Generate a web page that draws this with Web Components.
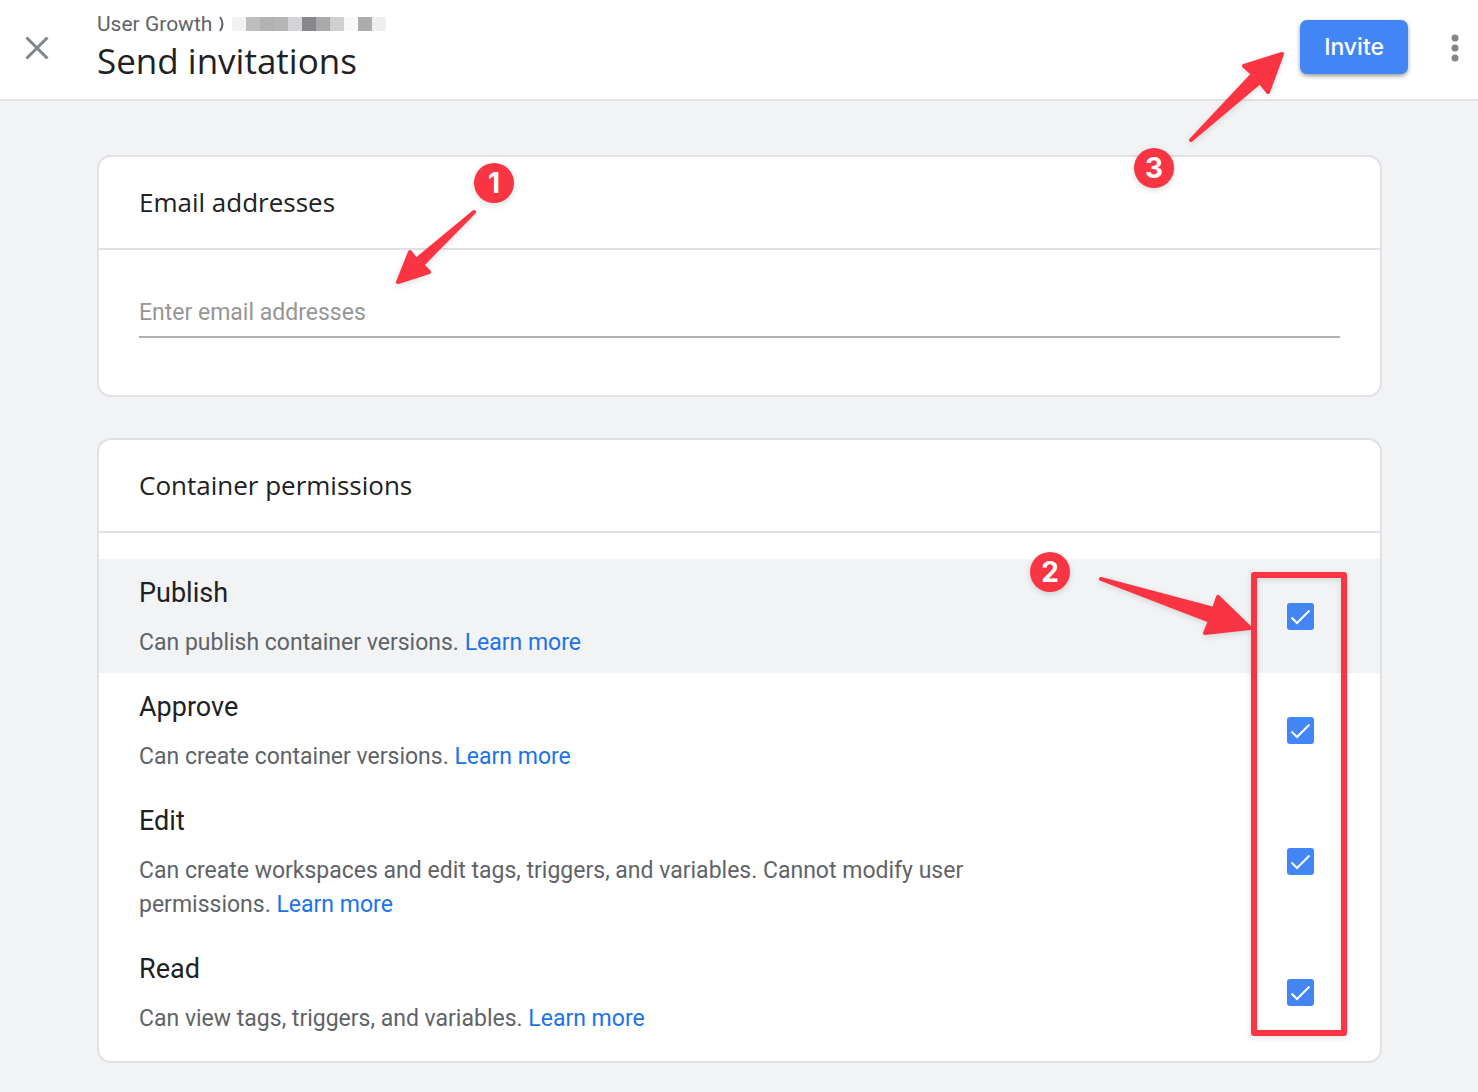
<!DOCTYPE html>
<html lang="en">
<head>
<meta charset="utf-8">
<title>Send invitations</title>
<style>
    body {
        margin: 0;
        min-height: 100vh;
        background: #f1f3f4;
        color: #202124;
        font-family: Roboto, "Liberation Sans", sans-serif;
        font-size: 23px;
        line-height: 34px;
    }
    main {
        display: flex;
        flex-direction: column;
        gap: 41px;
        padding: 54px 96px 29px 97px;
    }
    a {
        color: #1a73e8;
        text-decoration: none;
    }
    /* callouts lie over the page, each anchored to the box it is in */
    step-badge, step-arrow, step-frame {
        position: absolute;
        z-index: 2;
    }
    .badge-email { left: 375px; top: 6px; }
    .arrow-email { left: 296px; top: 52px; }
    .badge-permissions { right: 310px; top: 112px; }
    .arrow-permissions { right: 126px; top: 135px; }
    .frame-permissions { right: 33px; top: 132px; bottom: 25px; width: 96px; }
    .badge-invite { right: 304px; top: 148px; }
    .arrow-invite { right: 192px; top: 50px; }
</style>
</head>
<body>

<template id="app-header-template">
    <style>
        :host {
            position: relative;
            z-index: 1;
            display: flex;
            align-items: center;
            box-sizing: border-box;
            height: 101px;
            padding: 0 8px 2px 0;
            background: #fff;
            border-bottom: 2px solid #dfe1e5;
        }
        button {
            border: 0;
            padding: 0;
            background: none;
            font: inherit;
            cursor: pointer;
        }
        svg {
            display: block;
        }
        .close {
            padding: 24px 13px 26px;
        }
        .titles {
            flex: 1;
            margin-left: 23px;
        }
        .crumbs {
            display: flex;
            align-items: center;
            gap: 7px;
            color: #5f6368;
            font-size: 21px;
            line-height: 24px;
        }
        h1 {
            margin: 0;
            font-family: "Open Sans", sans-serif;
            font-size: 35px;
            font-weight: 400;
            line-height: 50px;
        }
        .invite {
            height: 54px;
            padding: 0 24px;
            margin: 0 30px 4px 0;
            border-radius: 7px;
            background: #4285f4;
            color: #fff;
            font-family: Inter, sans-serif;
            font-size: 23px;
            font-weight: 500;
            box-shadow: 0 2px 4px rgba(0, 0, 0, .4);
        }
    </style>
    <button class="close" aria-label="Close">
        <svg width="48" height="48" viewBox="0 0 48 48" fill="none" stroke="#80868b" stroke-width="3">
            <path d="M13.500 13.500L34.500 34.500M34.500 13.500L13.500 34.500"/>
        </svg>
    </button>
    <div class="titles">
        <div class="crumbs">
            <slot name="crumb"></slot>
            <svg width="6" height="16" viewBox="0 0 6 16" fill="none" stroke="#5f6368" stroke-width="2">
                <path d="M1 1Q6 8 1 15"/>
            </svg>
            <slot name="account"></slot>
        </div>
        <h1><slot></slot></h1>
    </div>
    <button class="invite"><slot name="action"></slot></button>
    <button aria-label="More options">
        <svg width="32" height="48" viewBox="0 0 32 48" fill="#80868b">
            <circle cx="17" cy="13" r="3.500"/>
            <circle cx="17" cy="23" r="3.500"/>
            <circle cx="17" cy="33" r="3.500"/>
        </svg>
    </button>
    <slot name="callout"></slot>
</template>

<template id="redacted-name-template">
    <style>
        :host {
            display: flex;
            height: 14px;
        }
        span {
            width: 14px;
        }
    </style>
</template>

<template id="settings-card-template">
    <style>
        :host {
            position: relative;
            display: block;
            background: #fff;
            border: 2px solid #dfe1e5;
            border-radius: 14px;
        }
        h2 {
            margin: 0;
            padding: 28px 40px 29px;
            border-bottom: 2px solid #dfe1e5;
            font-family: "Open Sans", sans-serif;
            font-size: 26px;
            font-weight: 400;
            line-height: 34px;
        }
    </style>
    <h2><slot name="title"></slot></h2>
    <slot></slot>
</template>

<template id="email-field-template">
    <style>
        :host {
            display: block;
            padding: 45px 40px 57px;
        }
        input {
            display: block;
            box-sizing: border-box;
            width: 100%;
            height: 43px;
            padding: 0 0 7px;
            border: 0;
            border-bottom: 2px solid #b0b0b0;
            outline: 0;
            background: none;
            color: inherit;
            font: inherit;
        }
        input::placeholder {
            color: #969696;
            opacity: 1;
        }
    </style>
    <input type="email" multiple>
</template>

<template id="permission-list-template">
    <style>
        :host {
            display: block;
            padding: 26px 0 12px;
        }
    </style>
    <slot></slot>
</template>

<template id="permission-row-template">
    <style>
        :host {
            display: flex;
            align-items: center;
            justify-content: space-between;
            padding: 17px 66px 13px 40px;
        }
        :host([active]) {
            background: #f1f3f4;
        }
        .text {
            max-width: 900px;
        }
        label {
            display: block;
            margin-bottom: 16px;
            font-size: 27px;
        }
        p {
            margin: 0;
            color: #5f6368;
        }
        .check {
            display: grid;
            margin-bottom: 4px;
        }
        input, svg {
            grid-area: 1 / 1;
            width: 27px;
            height: 27px;
            margin: 0;
        }
        input {
            appearance: none;
            border: 2px solid #5f6368;
            border-radius: 3px;
        }
        input:checked {
            border: 0;
            background: #4285f4;
        }
        svg {
            pointer-events: none;
        }
        input:not(:checked) + svg {
            visibility: hidden;
        }
    </style>
    <div class="text">
        <label for="permission"></label>
        <p><slot></slot></p>
    </div>
    <div class="check">
        <input type="checkbox" id="permission" checked>
        <svg viewBox="0 0 27 27" fill="none" stroke="#fff" stroke-width="2">
            <path d="M4.500 14.500L10 20L22.500 7.500"/>
        </svg>
    </div>
</template>

<template id="step-badge-template">
    <style>
        :host {
            display: flex;
            align-items: center;
            justify-content: center;
            width: 40px;
            height: 40px;
            border-radius: 50%;
            background: #fa3543;
            color: #fff;
            font: 700 28px/40px Inter, sans-serif;
            box-shadow: 0 2px 6px rgba(0, 0, 0, .15);
        }
    </style>
    <slot></slot>
</template>

<template id="step-arrow-template">
    <style>
        :host {
            pointer-events: none;
        }
        svg {
            display: block;
            overflow: visible;
            filter: drop-shadow(0 2px 3px rgba(0, 0, 0, .12));
        }
    </style>
    <svg fill="#fa3543" stroke="#fa3543" stroke-width="4" stroke-linejoin="round"><polygon/></svg>
</template>

<template id="step-frame-template">
    <style>
        :host {
            box-sizing: border-box;
            border: 6px solid #fa3543;
            border-radius: 3px;
            pointer-events: none;
            filter: drop-shadow(0 2px 3px rgba(0, 0, 0, .12));
        }
    </style>
</template>

<script>
    class TemplateElement extends HTMLElement {
        constructor() {
            super()
            const template = document.querySelector(`#${this.localName}-template`)
            this.attachShadow({mode: 'open'})
            this.shadowRoot.appendChild(document.importNode(template.content, true))
        }
    }

    window.customElements.define('app-header', class AppHeader extends TemplateElement {})
    window.customElements.define('settings-card', class SettingsCard extends TemplateElement {})
    window.customElements.define('permission-list', class PermissionList extends TemplateElement {})
    window.customElements.define('step-badge', class StepBadge extends TemplateElement {})
    window.customElements.define('step-frame', class StepFrame extends TemplateElement {})

    window.customElements.define('redacted-name',
    class RedactedName extends TemplateElement {
        connectedCallback() {
            const shades = ['#f1f3f3', '#bcbdbf', '#b0b1b3', '#b4b5b7', '#d3d4d6', '#87888c',
                '#a8a9ab', '#d0d0d2', '#f8f8f8', '#abacae', '#eeeeee']
            shades.forEach(shade => {
                const block = document.createElement('span')
                block.style.background = shade
                this.shadowRoot.appendChild(block)
            })
        }
    })

    window.customElements.define('email-field',
    class EmailField extends TemplateElement {
        connectedCallback() {
            const input = this.shadowRoot.querySelector('input')
            input.placeholder = this.getAttribute('placeholder')
            input.setAttribute('aria-label', this.getAttribute('label'))
        }
    })

    window.customElements.define('permission-row',
    class PermissionRow extends TemplateElement {
        connectedCallback() {
            this.shadowRoot.querySelector('label').textContent = this.getAttribute('name')
        }
    })

    // points are in pixels of the arrow's own width x height box
    window.customElements.define('step-arrow',
    class StepArrow extends TemplateElement {
        connectedCallback() {
            const svg = this.shadowRoot.querySelector('svg')
            svg.setAttribute('width', this.getAttribute('width'))
            svg.setAttribute('height', this.getAttribute('height'))
            svg.querySelector('polygon').setAttribute('points', this.getAttribute('points'))
        }
    })
</script>

<app-header>
    <span slot="crumb">User Growth</span>
    <redacted-name slot="account"></redacted-name>
    Send invitations
    <span slot="action">Invite</span>
    <step-arrow slot="callout" class="arrow-invite" width="98" height="93" points="3,90 65,24 56,16 94,4 80,42 72,32"></step-arrow>
    <step-badge slot="callout" class="badge-invite">3</step-badge>
</app-header>

<main>
    <settings-card>
        <span slot="title">Email addresses</span>
        <email-field label="Email addresses" placeholder="Enter email addresses"></email-field>
        <step-badge class="badge-email">1</step-badge>
        <step-arrow class="arrow-email" width="82" height="77" points="79,3 21,51 15,43 3,73 34,63 27,56"></step-arrow>
    </settings-card>

    <settings-card>
        <span slot="title">Container permissions</span>
        <permission-list>
            <permission-row name="Publish" active>Can publish container versions. <a href="#publish">Learn more</a></permission-row>
            <permission-row name="Approve">Can create container versions. <a href="#approve">Learn more</a></permission-row>
            <permission-row name="Edit">Can create workspaces and edit tags, triggers, and variables. Cannot modify user permissions. <a href="#edit">Learn more</a></permission-row>
            <permission-row name="Read">Can view tags, triggers, and variables. <a href="#read">Learn more</a></permission-row>
        </permission-list>
        <step-badge class="badge-permissions">2</step-badge>
        <step-arrow class="arrow-permissions" width="156" height="63" points="3,4 116,34 120,22 152,53 107,58 112,46"></step-arrow>
        <step-frame class="frame-permissions"></step-frame>
    </settings-card>
</main>

</body>
</html>
